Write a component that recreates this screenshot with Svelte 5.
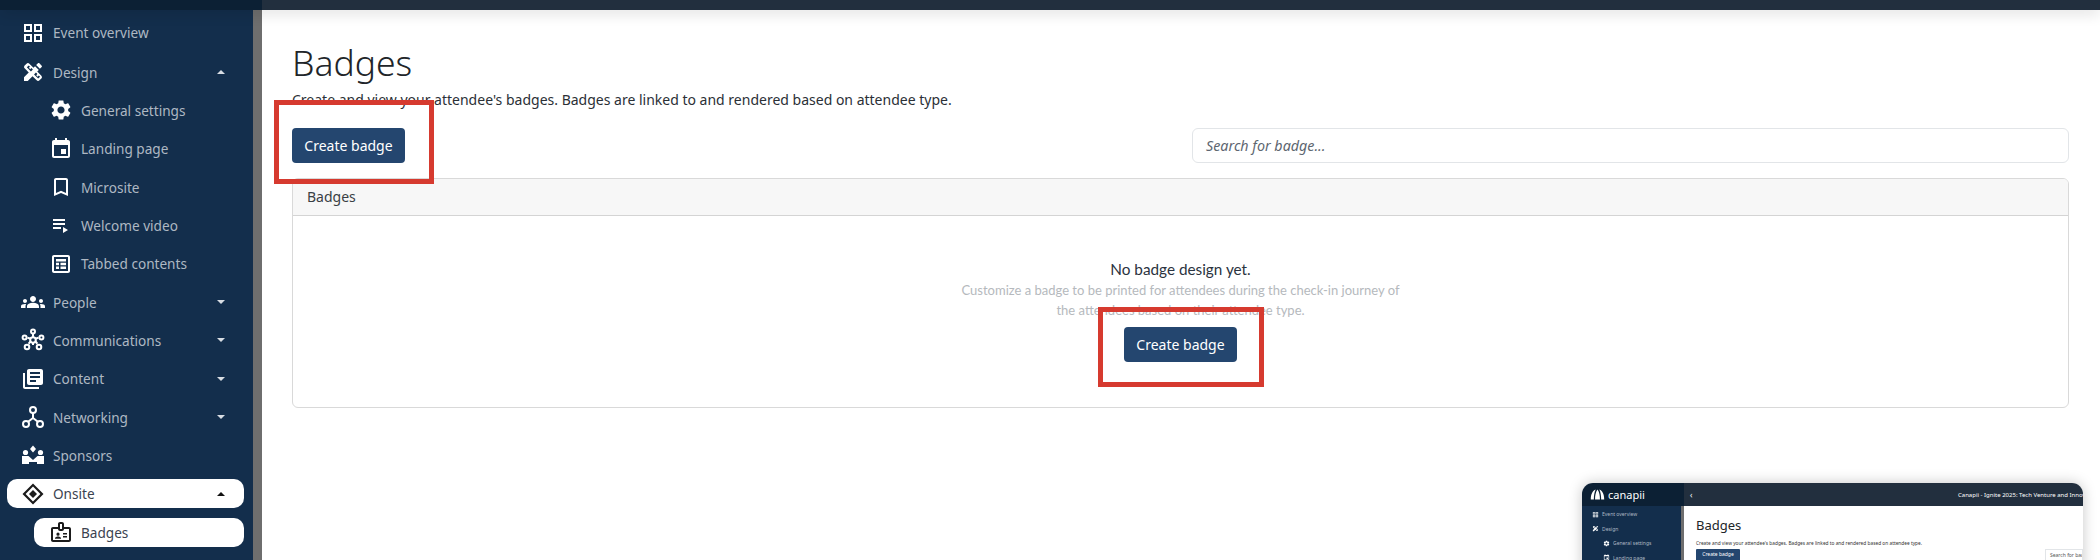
<script>
  const paths = {
    grid: 'M3 3v8h8V3H3zm6 6H5V5h4v4zm-6 4v8h8v-8H3zm6 6H5v-4h4v4zm4-16v8h8V3h-8zm6 6h-4V5h4v4zm-6 4v8h8v-8h-8zm6 6h-4v-4h4v4z',
    design: 'M16.24,11.51l1.57-1.57l-3.75-3.75l-1.57,1.57L8.35,3.63c-0.78-0.78-2.05-0.78-2.83,0l-1.9,1.9c-0.78,0.78-0.78,2.05,0,2.83l4.13,4.13L3,17.25V21h3.75l4.76-4.76l4.13,4.13c0.95,0.95,2.23,0.6,2.83,0l1.9-1.9c0.78-0.78,0.78-2.05,0-2.83L16.24,11.51z M9.95,11.4L5.83,7.28l1.89-1.9l1.27,1.27L7.81,7.84l1.41,1.41l1.19-1.19l1.45,1.45L9.95,11.4z M17.16,18.62l-4.12-4.12l1.9-1.9l1.45,1.45l-1.19,1.19l1.41,1.41l1.19-1.19l1.27,1.27L17.16,18.62z M20.71,7.04c0.39-0.39,0.39-1.02,0-1.41l-2.34-2.34c-0.47-0.47-1.12-0.29-1.41,0l-1.83,1.83l3.75,3.75L20.71,7.04z',
    gear: 'M19.14 12.94c.04-.3.06-.61.06-.94 0-.32-.02-.64-.07-.94l2.03-1.58c.18-.14.23-.41.12-.61l-1.92-3.32c-.12-.22-.37-.29-.59-.22l-2.39.96c-.5-.38-1.03-.7-1.62-.94l-.36-2.54c-.04-.24-.24-.41-.48-.41h-3.84c-.24 0-.43.17-.47.41l-.36 2.54c-.59.24-1.13.57-1.62.94l-2.39-.96c-.22-.08-.47 0-.59.22L2.74 8.87c-.12.21-.08.47.12.61l2.03 1.58c-.05.3-.09.63-.09.94s.02.64.07.94l-2.03 1.58c-.18.14-.23.41-.12.61l1.92 3.32c.12.22.37.29.59.22l2.39-.96c.5.38 1.03.7 1.62.94l.36 2.54c.05.24.24.41.48.41h3.84c.24 0 .44-.17.47-.41l.36-2.54c.59-.24 1.13-.56 1.62-.94l2.39.96c.22.08.47 0 .59-.22l1.92-3.32c.12-.22.07-.47-.12-.61l-2.01-1.58zM12 15.6c-1.98 0-3.6-1.62-3.6-3.6s1.62-3.6 3.6-3.6 3.6 1.62 3.6 3.6-1.62 3.6-3.6 3.6z',
    event: 'M17 12h-5v5h5v-5zM16 1v2H8V1H6v2H5c-1.11 0-1.99.9-1.99 2L3 19c0 1.1.89 2 2 2h14c1.1 0 2-.9 2-2V5c0-1.1-.9-2-2-2h-1V1h-2zm3 18H5V8h14v11z',
    bookmark: 'M17 3H7c-1.1 0-1.99.9-1.99 2L5 21l7-3 7 3V5c0-1.1-.9-2-2-2zm0 15l-5-2.18L7 18V5h10v13z',
    playlist: 'M4 10h12v2H4zm0-4h12v2H4zm0 8h8v2H4zm10 0v6l5-3z',
    tabbed: 'M5 3h14c1.1 0 2 .9 2 2v14c0 1.1-.9 2-2 2H5c-1.1 0-2-.9-2-2V5c0-1.1.9-2 2-2zm0 2v14h14V5H5zm2 2h10v2.5H7zm0 3.8h3v2.4H7zm4.5 0H17v2.4h-5.5zM7 14.5h3V17H7zm4.5 0H17V17h-5.5z',
    groups: 'M12 12.75c1.63 0 3.07.39 4.24.9 1.08.48 1.76 1.56 1.76 2.73V18H6v-1.61c0-1.18.68-2.26 1.76-2.73 1.17-.52 2.61-.91 4.24-.91zM4 13c1.1 0 2-.9 2-2s-.9-2-2-2-2 .9-2 2 .9 2 2 2zm1.13 1.1c-.37-.06-.74-.1-1.13-.1-.99 0-1.93.21-2.78.58C.48 14.9 0 15.62 0 16.43V18h4.5v-1.61c0-.83.23-1.61.63-2.29zM20 13c1.1 0 2-.9 2-2s-.9-2-2-2-2 .9-2 2 .9 2 2 2zm4 3.43c0-.81-.48-1.53-1.22-1.85-.85-.37-1.79-.58-2.78-.58-.39 0-.76.04-1.13.1.4.68.63 1.46.63 2.29V18H24v-1.57zM12 6c1.66 0 3 1.34 3 3s-1.34 3-3 3-3-1.34-3-3 1.34-3 3-3z',
    library: 'M4 6H2v14c0 1.1.9 2 2 2h14v-2H4V6zm16-4H8c-1.1 0-2 .9-2 2v12c0 1.1.9 2 2 2h12c1.1 0 2-.9 2-2V4c0-1.1-.9-2-2-2zm-1 9H9V9h10v2zm-4 4H9v-2h6v2zm4-8H9V5h10v2z',
    badge: 'M20 7h-5V4c0-1.1-.9-2-2-2h-2c-1.1 0-2 .9-2 2v3H4c-1.1 0-2 .9-2 2v11c0 1.1.9 2 2 2h16c1.1 0 2-.9 2-2V9c0-1.1-.9-2-2-2zm-9-3h2v5h-2V4zm9 16H4V9h5c0 1.1.9 2 2 2h2c1.1 0 2-.9 2-2h5v11zM14 13h4v1.5h-4zm0 3h4v1.5h-4zm-5-.2a1.6 1.6 0 1 0 0-3.2 1.6 1.6 0 0 0 0 3.2zM6 18.8v-.7c0-1 2-1.6 3-1.6s3 .6 3 1.6v.7z'
  };

  const items = [
    { label: 'Event overview', icon: 'grid' },
    { label: 'Design', icon: 'design', caret: 'up', gap: true },
    { label: 'General settings', icon: 'gear', sub: true },
    { label: 'Landing page', icon: 'event', sub: true },
    { label: 'Microsite', icon: 'bookmark', sub: true },
    { label: 'Welcome video', icon: 'playlist', sub: true },
    { label: 'Tabbed contents', icon: 'tabbed', sub: true },
    { label: 'People', icon: 'groups', caret: 'down' },
    { label: 'Communications', icon: 'hub', caret: 'down' },
    { label: 'Content', icon: 'library', caret: 'down' },
    { label: 'Networking', icon: 'net', caret: 'down' },
    { label: 'Sponsors', icon: 'sponsor' },
    { label: 'Onsite', icon: 'onsite', caret: 'up', active: true },
    { label: 'Badges', icon: 'badge', sub: true, active: true }
  ];
  const miniItems = items.slice(0, 4);
</script>

{#snippet glyph(name)}
  <svg class="icon" viewBox="0 0 24 24" aria-hidden="true">
    {#if paths[name]}
      <path d={paths[name]} fill="currentColor" />
    {:else if name === 'hub'}
      <g fill="none" stroke="currentColor" stroke-width="2">
        <path d="M12 9.5V6M12 14.5V17M9.8 10.7 6.5 9.8M14.2 10.7 17.5 9.8M9.8 13.3l-2.2 2.4M14.2 13.3l2.2 2.4" />
        <circle cx="12" cy="12" r="2.8" /><circle cx="12" cy="3.6" r="2" /><circle cx="3.6" cy="9.5" r="2" />
        <circle cx="20.4" cy="9.5" r="2" /><circle cx="6" cy="19" r="2.3" /><circle cx="18" cy="19" r="2.3" />
      </g>
    {:else if name === 'net'}
      <g fill="none" stroke="currentColor" stroke-width="2">
        <circle cx="12" cy="5" r="3" /><circle cx="5" cy="19" r="3" /><circle cx="19" cy="19" r="3" />
        <path d="M12 8v5M12 13l-5.2 4M12 13l5.2 4" />
      </g>
    {:else if name === 'sponsor'}
      <g fill="currentColor">
        <path d="M12 2.5 15 6l-3 3.5L9 6z" />
        <circle cx="4.5" cy="9.5" r="2.6" /><circle cx="19.5" cy="9.5" r="2.6" />
        <path d="M1 13h6.5l4.5 4 4.5-4H23v8h-7v-2l-4 0-4 0v2H1z" />
      </g>
    {:else if name === 'onsite'}
      <g fill="currentColor">
        <path d="M12 1.5 22.5 12 12 22.5 1.5 12zM12 4.6 4.6 12l7.4 7.4 7.4-7.4z" fill-rule="evenodd" />
        <path d="M12 8l4 4-4 4-4-4z" />
      </g>
    {/if}
  </svg>
{/snippet}

<div class="page">
  <div class="topbar">
    <div class="topbar-left"></div>
    <div class="topbar-right"></div>
  </div>

  <div class="body">
    <nav class="sidebar">
      <ul class="menu">
        {#each items as item}
          <li class="row" class:sub={item.sub} class:active={item.active} class:gap={item.gap}>
            {@render glyph(item.icon)}
            <span class="label">{item.label}</span>
            {#if item.caret}
              <span class="caret {item.caret}"></span>
            {/if}
          </li>
        {/each}
      </ul>
    </nav>
    <div class="rail"></div>

    <main class="content">
      <h1>Badges</h1>
      <p class="lead">Create and view your attendee's badges. Badges are linked to and rendered based on attendee type.</p>
      <div class="toolbar">
        <button class="btn">Create badge</button>
        <div class="search">Search for badge...</div>
      </div>
      <section class="card">
        <header>Badges</header>
        <div class="empty">
          <strong>No badge design yet.</strong>
          <p>Customize a badge to be printed for attendees during the check-in journey of the attendees based on their attendee type.</p>
          <button class="btn">Create badge</button>
        </div>
      </section>
    </main>
  </div>

  <div class="mark mark-a"></div>
  <div class="mark mark-b"></div>

  <aside class="thumb">
    <div class="t-head">
      <div class="t-logo">
        <svg viewBox="0 0 24 18" aria-hidden="true">
          <path d="M1 17C1 9 4 3 9 1c-2 4-3 10-3 16zM8 17c0-6 1-12 4-16 3 4 4 10 4 16zM18 17c0-6-1-12-3-16 5 2 8 8 8 16z" fill="#fff" />
        </svg>
        <span>canapii</span>
      </div>
      <div class="t-bar">
        <span class="t-chev">‹</span>
        <span class="t-title">Canapii - Ignite 2025: Tech Venture and Innovation</span>
      </div>
    </div>
    <div class="t-body">
      <div class="t-side">
        {#each miniItems as item}
          <div class="t-row" class:sub={item.sub}>
            {@render glyph(item.icon)}
            <span>{item.label}</span>
          </div>
        {/each}
      </div>
      <div class="t-rail"></div>
      <div class="t-main">
        <div class="t-h1">Badges</div>
        <div class="t-lead">Create and view your attendee's badges. Badges are linked to and rendered based on attendee type.</div>
        <div class="t-tools">
          <span class="t-btn">Create badge</span>
          <span class="t-search">Search for badge...</span>
        </div>
      </div>
    </div>
  </aside>
</div>

<style>
  :global(body) { margin: 0; background: #fff; }
  * { box-sizing: border-box; }

  .page {
    position: relative;
    width: 2100px;
    height: 560px;
    overflow: hidden;
    display: flex;
    flex-direction: column;
    font-family: "Noto Sans", "Open Sans", sans-serif;
    color: #212529;
    background: #fff;
  }

  .topbar { display: flex; height: 10px; flex: none; position: relative; z-index: 2; box-shadow: 0 4px 14px rgba(0,0,0,.13); }
  .topbar-left { width: 262px; background: #0c2034; }
  .topbar-right { flex: 1; background: #222f3e; }

  .body { flex: 1; display: flex; min-height: 0; }

  .sidebar { width: 253px; flex: none; background: #132e4c; padding: 8px 9px 0 7px; }
  .menu { list-style: none; margin: 0; padding: 0; }
  .row {
    position: relative;
    display: flex;
    align-items: center;
    gap: 8px;
    height: 29px;
    margin-bottom: 9.35px;
    padding-left: 14px;
    border-radius: 10px;
    color: #fff;
  }
  .row.gap { margin-top: 10.5px; }
  .row.sub { margin-left: 27px; padding-left: 15px; }
  .row.active { background: #fff; color: #1b1b1b; }
  .icon { width: 24px; height: 24px; flex: none; display: block; }
  .label { font-size: 13.6px; color: #aeb8c3; }
  .row.active .label { color: #3b4350; }
  .caret {
    position: absolute;
    right: 19px;
    width: 0;
    height: 0;
    border-left: 4px solid transparent;
    border-right: 4px solid transparent;
  }
  .caret.up { border-bottom: 4px solid #d8dde3; }
  .caret.down { border-top: 4px solid #d8dde3; }
  .row.active .caret.up { border-bottom-color: #111; }

  .rail { width: 9px; flex: none; background: #6e6e6e; }

  .content { flex: 1; min-width: 0; padding: 32px 31px 0 30px; }

  h1 {
    margin: 0;
    font-size: 35.5px;
    font-weight: 300;
    line-height: 40px;
    color: #212529;
  }
  .lead { margin: 8px 0 0; font-size: 14px; line-height: 20px; color: #2b3036; }

  .toolbar { display: flex; justify-content: space-between; align-items: stretch; margin-top: 18px; }
  .btn {
    height: 35px;
    width: 113px;
    padding: 0;
    border: 0;
    border-radius: 4px;
    background: #24466f;
    color: #fff;
    white-space: nowrap;
    font: 400 14px "Noto Sans", sans-serif;
  }
  .search {
    width: 877px;
    height: 35px;
    padding: 0 13px;
    display: flex;
    align-items: center;
    border: 1px solid #e2e5e8;
    border-radius: 6px;
    font-style: italic;
    font-size: 14.3px;
    color: #5d6670;
  }

  .card { margin-top: 15px; border: 1px solid #d9d9d9; border-radius: 6px; height: 230px; overflow: hidden; }
  .card header {
    height: 37px;
    padding: 0 14px 2px;
    display: flex;
    align-items: center;
    background: #f7f7f7;
    border-bottom: 1px solid #d4d4d4;
    font-size: 14px;
    color: #3a3f45;
  }
  .empty { display: flex; flex-direction: column; align-items: center; padding-top: 43px; text-align: center; }
  .empty strong { font-family: "Lato", sans-serif; font-weight: 400; font-size: 15.3px; line-height: 20px; color: #2b3340; }
  .empty p { width: 450px; margin: 1px 0 0; font-family: "Lato", sans-serif; font-size: 13px; line-height: 20px; color: #b5b9bd; }
  .empty .btn { margin-top: 7px; }

  .mark { position: absolute; border: 5px solid #d63a2f; }
  .mark-a { left: 274px; top: 100px; width: 160px; height: 84px; }
  .mark-b { left: 1098px; top: 307px; width: 166px; height: 80px; }

  .thumb {
    position: absolute;
    left: 1582px;
    top: 483px;
    width: 501px;
    height: 90px;
    border-radius: 11px 11px 0 0;
    overflow: hidden;
    background: #fff;
    box-shadow: 0 0 14px rgba(0,0,0,.22);
  }
  .t-head { display: flex; height: 23px; }
  .t-logo { width: 102px; background: #0c2034; display: flex; align-items: center; gap: 3px; padding-left: 8px; color: #fff; font-size: 11px; }
  .t-logo svg { width: 15px; height: 11px; }
  .t-bar { flex: 1; background: #222f3e; display: flex; align-items: center; padding-left: 6px; color: #fff; overflow: hidden; }
  .t-chev { font-size: 8px; width: 268px; flex: none; }
  .t-title { font-size: 6px; white-space: nowrap; }
  .t-body { display: flex; }
  .t-side { width: 99px; height: 70px; background: #132e4c; padding-top: 1px; color: #fff; }
  .t-row { display: flex; align-items: center; gap: 3px; height: 14.5px; padding-left: 10px; font-size: 5px; }
  .t-row.sub { padding-left: 21px; }
  .t-row .icon { width: 7px; height: 7px; }
  .t-row span { color: #aeb8c3; }
  .t-rail { width: 3px; background: #6e6e6e; }
  .t-main { flex: 1; padding: 11px 0 0 12px; }
  .t-h1 { font-size: 13px; line-height: 16px; color: #212529; }
  .t-lead { font-size: 4.8px; line-height: 8px; margin-top: 6px; color: #333; white-space: nowrap; }
  .t-tools { display: flex; justify-content: space-between; margin-top: 2px; }
  .t-btn { width: 44px; height: 12px; background: #24466f; color: #fff; border-radius: 1px; font-size: 5px; line-height: 10px; text-align: center; }
  .t-search { width: 38px; height: 12px; border: 1px solid #e2e5e8; font-size: 5px; line-height: 10px; padding-left: 4px; white-space: nowrap; overflow: hidden; color: #555; }
</style>
